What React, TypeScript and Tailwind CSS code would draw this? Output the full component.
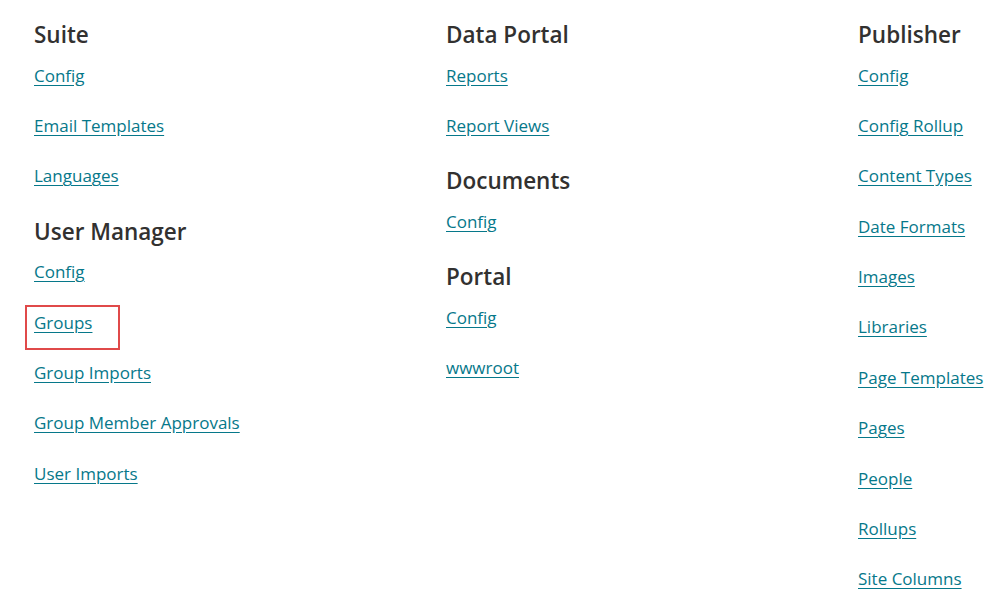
const columns: { title: string; links: string[] }[][] = [
  [
    { title: "Suite", links: ["Config", "Email Templates", "Languages"] },
    {
      title: "User Manager",
      links: [
        "Config",
        "Groups",
        "Group Imports",
        "Group Member Approvals",
        "User Imports",
      ],
    },
  ],
  [
    { title: "Data Portal", links: ["Reports", "Report Views"] },
    { title: "Documents", links: ["Config"] },
    { title: "Portal", links: ["Config", "wwwroot"] },
  ],
  [
    {
      title: "Publisher",
      links: [
        "Config",
        "Config Rollup",
        "Content Types",
        "Date Formats",
        "Images",
        "Libraries",
        "Page Templates",
        "Pages",
        "People",
        "Rollups",
        "Site Columns",
      ],
    },
  ],
];

const App = () => {
  return (
    <div className="min-h-screen bg-white pl-[34px] pt-[20px] font-['Open_Sans',sans-serif]">
      <div className="grid grid-cols-[412px_412px_1fr]">
        {columns.map((sections, ci) => (
          <div key={ci} className="flex flex-col">
            {sections.map((section, si) => (
              <div key={section.title} className={si > 0 ? "mt-[3px]" : ""}>
                <h2 className="text-[22.5px] leading-[30px] font-semibold text-[#323130] mb-[12.5px]">
                  {section.title}
                </h2>
                <ul className="flex flex-col">
                  {section.links.map((link, li) => {
                    // the "Groups" entry carries a red outline
                    const highlighted = ci === 0 && si === 1 && link === "Groups";
                    return (
                      <li key={li} className="h-[50.4px]">
                        <a
                          href="#"
                          className="relative inline-block text-[17px] leading-[26px] text-[#06788a] underline underline-offset-[3px]"
                        >
                          {link}
                          {highlighted && (
                            <span className="absolute left-[-9px] top-[-5px] w-[95px] h-[45px] border-2 border-[#e04a4a]" />
                          )}
                        </a>
                      </li>
                    );
                  })}
                </ul>
              </div>
            ))}
          </div>
        ))}
      </div>
    </div>
  );
};

export default App;
